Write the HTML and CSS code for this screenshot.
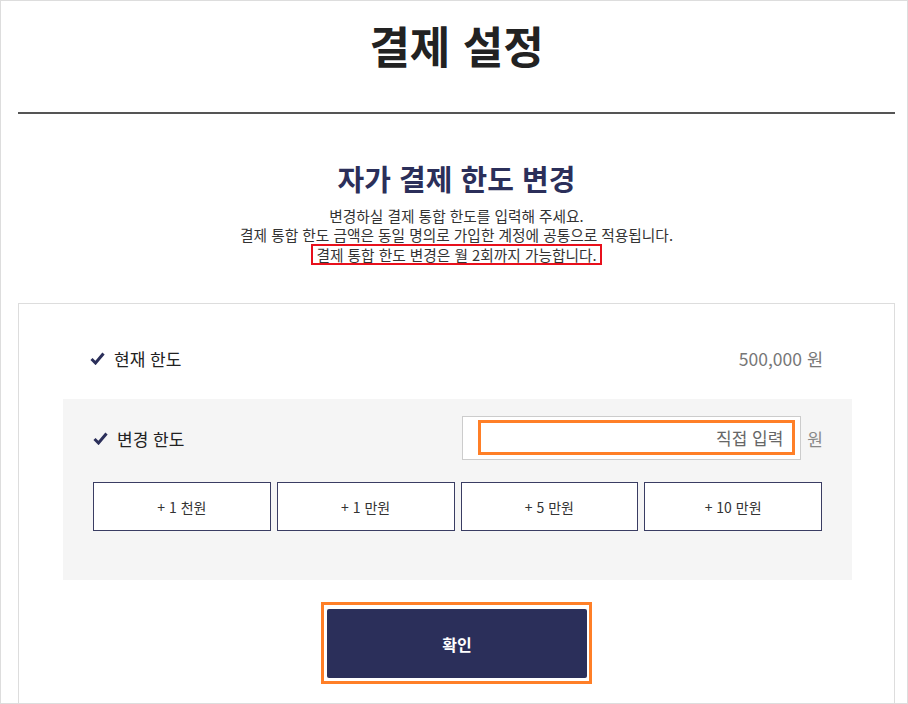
FILE: index.html
```html
<!DOCTYPE html>
<html lang="ko">
<head>
  <meta charset="UTF-8" />
  <meta name="viewport" content="width=device-width, initial-scale=1.0"/>
  <title>결제 설정</title>
  <link rel="stylesheet" href="styles.css">
</head>
<body>
  <div class="page">
    <h1 class="page-title">결제 설정</h1>
    <hr class="title-line">

    <h2 class="section-title">자가 결제 한도 변경</h2>
    <p class="desc">
      변경하실 결제 통합 한도를 입력해 주세요.<br>
      결제 통합 한도 금액은 동일 명의로 가입한 계정에 공통으로 적용됩니다.<br>
      <span class="desc-mark">결제 통합 한도 변경은 월 2회까지 가능합니다.</span>
    </p>

    <div class="card">
      <div class="row row-current">
        <div class="label">
          <svg class="check" width="15" height="13" viewBox="0 0 15 13"><path d="M1.5 7 L5.5 11 L13.5 1.5" fill="none" stroke="#2b2f5a" stroke-width="3"/></svg>
          현재 한도
        </div>
        <div class="amount">500,000 원</div>
      </div>

      <div class="change-box">
        <div class="row row-change">
          <div class="label">
            <svg class="check" width="15" height="13" viewBox="0 0 15 13"><path d="M1.5 7 L5.5 11 L13.5 1.5" fill="none" stroke="#2b2f5a" stroke-width="3"/></svg>
            변경 한도
          </div>
          <div class="input-wrap">
            <div class="input-box">
              <input class="amount-input" type="text" placeholder="직접 입력">
            </div>
            <span class="unit">원</span>
          </div>
        </div>
        <div class="quick-buttons">
          <button class="quick-btn">+ 1 천원</button>
          <button class="quick-btn">+ 1 만원</button>
          <button class="quick-btn">+ 5 만원</button>
          <button class="quick-btn">+ 10 만원</button>
        </div>
      </div>

      <div class="confirm-area">
        <div class="confirm-mark">
          <button class="confirm-btn">확인</button>
        </div>
      </div>
    </div>
  </div>
</body>
</html>
```

FILE: styles.css
```css
body {
  margin: 0;
  font-family: "Noto Sans CJK KR", "Noto Sans", sans-serif;
  background: #fff;
  color: #222;
}

.page {
  box-sizing: border-box;
  height: 704px;
  border: 1px solid #ddd;
  padding-left: 5px;
  overflow: hidden;
}

.page-title {
  margin: 0;
  padding-top: 14px;
  height: 60px;
  line-height: 60px;
  text-align: center;
  font-size: 44px;
  font-weight: 700;
  color: #222;
}

.title-line {
  margin: 37px 12px 0;
  border: none;
  height: 2px;
  background: #555;
}

.section-title {
  margin: 44px 0 0;
  line-height: 40px;
  text-align: center;
  font-size: 29px;
  font-weight: 700;
  color: #2b2f5a;
}

.desc {
  margin: 8px 0 0;
  text-align: center;
  font-size: 14.7px;
  line-height: 19px;
  color: #333;
}

.desc-mark {
  display: inline-block;
  border: 2px solid #e8101c;
  padding: 0 3px;
  line-height: 17px;
}

.card {
  margin: 38px 12px 0;
  border: 1px solid #ddd;
  border-bottom: none;
  padding: 27px 42px 0 44px;
  height: 420px;
}

.row {
  display: flex;
  align-items: center;
  justify-content: space-between;
}

.row-current {
  height: 54px;
  padding: 0 29px 0 27px;
}

.label {
  display: flex;
  align-items: center;
  gap: 9px;
  font-size: 17px;
  color: #222;
}

.check {
  margin-top: 1px;
}

.amount {
  font-size: 17.5px;
  color: #777;
}

.change-box {
  margin-top: 14px;
  background: #f5f5f5;
  padding: 17px 30px 49px;
}

.row-change {
  height: 44px;
}

.input-wrap {
  display: flex;
  align-items: center;
  margin-right: -1px;
}

.input-box {
  box-sizing: border-box;
  width: 339px;
  height: 44px;
  border: 1px solid #ccc;
  background: #fff;
  padding: 3px 5px 4px 15px;
}

.amount-input {
  box-sizing: border-box;
  width: 100%;
  height: 35px;
  border: 3px solid #ff7f27;
  padding: 0 9px;
  text-align: right;
  font-family: inherit;
  font-size: 17px;
  outline: none;
}

.amount-input::placeholder {
  color: #666;
}

.unit {
  margin-left: 6px;
  font-size: 17px;
  color: #888;
}

.quick-buttons {
  display: grid;
  grid-template-columns: repeat(4, 1fr);
  gap: 6px;
  margin-top: 22px;
}

.quick-btn {
  height: 49px;
  background: #fff;
  border: 1px solid #3a3d63;
  font-family: inherit;
  font-size: 14px;
  color: #333;
  cursor: pointer;
}

.confirm-area {
  display: flex;
  justify-content: center;
  margin-top: 22px;
  padding-right: 2px;
}

.confirm-mark {
  border: 3px solid #ff7f27;
  padding: 4px 2px 3px 3px;
}

.confirm-btn {
  display: block;
  width: 260px;
  height: 69px;
  border: none;
  border-radius: 2px;
  background: #2b2f5a;
  color: #fff;
  font-family: inherit;
  font-size: 16px;
  font-weight: 700;
  cursor: pointer;
}
```
